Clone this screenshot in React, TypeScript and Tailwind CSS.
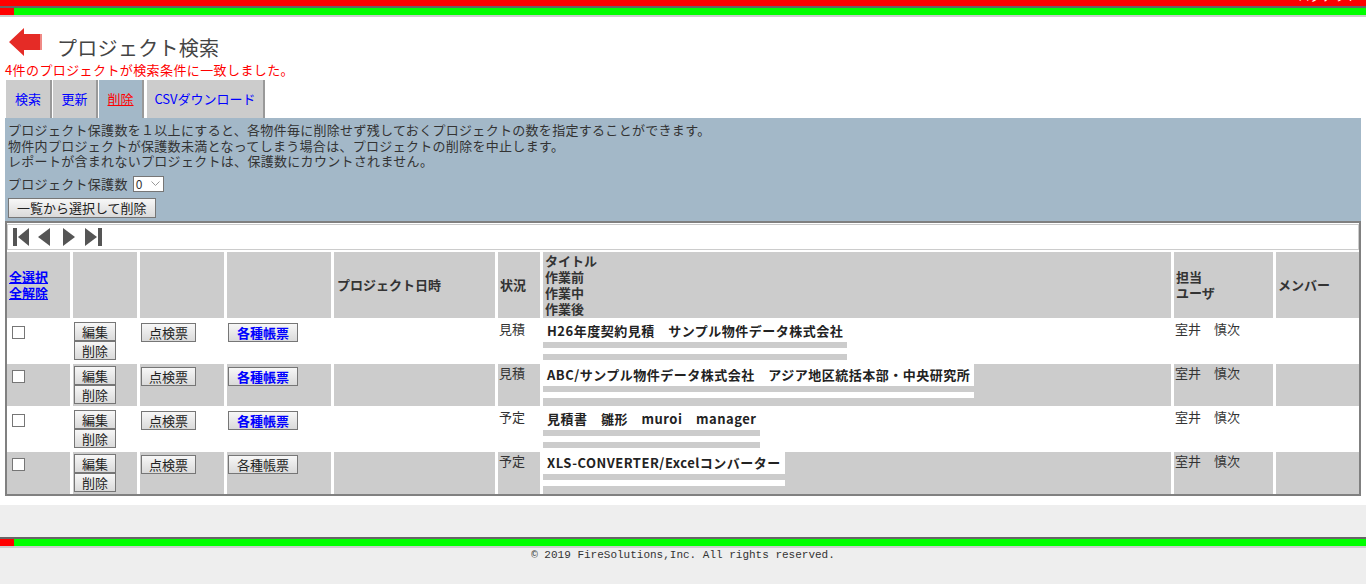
import React from "react";

type Row = {
  status: string;
  title: string;
  user: string;
  gray: boolean;
  boldForms: boolean;
};

const ROWS: Row[] = [
  { status: "見積", title: "H26年度契約見積　サンプル物件データ株式会社", user: "室井　慎次", gray: false, boldForms: true },
  { status: "見積", title: "ABC/サンプル物件データ株式会社　アジア地区統括本部・中央研究所", user: "室井　慎次", gray: true, boldForms: true },
  { status: "予定", title: "見積書　雛形　muroi　manager", user: "室井　慎次", gray: false, boldForms: true },
  { status: "予定", title: "XLS-CONVERTER/Excelコンバーター", user: "室井　慎次", gray: true, boldForms: false },
];

const btn =
  "bg-linear-to-b from-[#f7f7f7] to-[#dadada] border border-[#767676] text-[13px] leading-[17px] text-[#222] whitespace-nowrap";

// header stripes (red / gray / green)
function Stripe({ top }: { top: boolean }) {
  return (
    <div>
      {top && (
        <div className="h-[6px] bg-[#ff0000] overflow-hidden flex justify-end pr-[8px]">
          <span className="text-white text-[12px] leading-[12px] -mt-[10px]">ログアウト</span>
        </div>
      )}
      <div className="h-[2px] bg-[#666]" />
      <div className="h-[7px] bg-[#00ff00] flex">
        <div className="w-[14px] bg-[#ff0000]" />
      </div>
      <div className="h-[2px] bg-[#ccc]" />
    </div>
  );
}

function NavIcons() {
  return (
    <svg width="92" height="18" viewBox="0 0 92 18" className="block">
      <g fill="#555">
        <rect x="0" y="0" width="4" height="18" />
        <polygon points="16,0 16,18 5,9" />
        <polygon points="37,0 37,18 25,9" />
        <polygon points="50,0 50,18 62,9" />
        <polygon points="72,0 72,18 84,9" />
        <rect x="85" y="0" width="4" height="18" />
      </g>
    </svg>
  );
}

export default function App() {
  const cell = (gray: boolean) => (gray ? "bg-[#cccccc]" : "bg-white");
  return (
    <div className="w-[1366px] min-h-[585px] bg-white text-[#333] font-['Noto_Sans_CJK_JP','Noto_Sans',sans-serif]">
      <Stripe top />

      {/* title */}
      <div className="flex items-start pl-[9px] pt-[11px]">
        <svg width="33" height="28" viewBox="0 0 33 28" className="block">
          <polygon points="0,14 15,0 15,6 32,6 32,22 15,22 15,28" fill="#e52b26" />
          <rect x="31" y="6" width="2" height="16" fill="#f08a86" />
        </svg>
        <h1 className="ml-[15px] mt-[8px] text-[20px] leading-[24px] text-[#444] tracking-[0.3px]">
          プロジェクト検索
        </h1>
      </div>
      <p className="pl-[5px] mt-[2px] text-[13px] leading-[16px] text-[#ff0000] tracking-[0.4px]">
        4件のプロジェクトが検索条件に一致しました。
      </p>

      {/* tabs */}
      <div className="flex mt-[2px] pl-[6px] h-[38px] text-[13px]">
        <div className="w-[46px] bg-[#ccc] border-r-2 border-[#999] flex items-center justify-center text-[#0000ff]">検索</div>
        <div className="ml-[1px] w-[45px] bg-[#ccc] border-r-2 border-[#999] flex items-center justify-center text-[#0000ff]">更新</div>
        <div className="ml-[1px] w-[45px] bg-[#a3b8c8] border-r-2 border-[#999] flex items-center justify-center text-[#ff0000] underline">削除</div>
        <div className="ml-[3px] w-[118px] bg-[#ccc] border-r-2 border-[#999] flex items-center justify-center text-[#0000ff]">CSVダウンロード</div>
      </div>

      {/* panel */}
      <div className="mx-[5px] bg-[#a3b8c8] px-[3px] pt-[4px] pb-[3px] text-[13px] leading-[15.5px] tracking-[0.3px]">
        <p>プロジェクト保護数を１以上にすると、各物件毎に削除せず残しておくプロジェクトの数を指定することができます。</p>
        <p>物件内プロジェクトが保護数未満となってしまう場合は、プロジェクトの削除を中止します。</p>
        <p>レポートが含まれないプロジェクトは、保護数にカウントされません。</p>
        <div className="flex items-center mt-[7px] h-[16px]">
          <span>プロジェクト保護数</span>
          <div className="ml-[5px] w-[31px] h-[16px] bg-white border border-[#767676] flex items-center justify-between pl-[2px] pr-[3px] text-[12px] leading-[14px] tracking-normal">
            <span>0</span>
            <svg width="9" height="5" viewBox="0 0 9 5">
              <polyline points="0.5,0.5 4.5,4.5 8.5,0.5" fill="none" stroke="#999" strokeWidth="1" />
            </svg>
          </div>
        </div>
        <button className={`${btn} mt-[6px] px-[8px] leading-[18px] block tracking-normal`}>一覧から選択して削除</button>
      </div>

      {/* table */}
      <div className="mx-[5px] border-2 border-[#808080] bg-white">
        <div className="mt-[1px] h-[26px] border border-[#ccc] flex items-center pl-[5px]">
          <NavIcons />
        </div>
        <div className="mt-[2px] grid grid-cols-[63px_64px_84px_104px_161px_42px_1fr_99px_83px] gap-x-[3px] gap-y-[2px] text-[13px]">
          {/* header */}
          <div className="bg-[#ccc] h-[66px] flex flex-col justify-center pl-[2px] font-bold leading-[16px] text-[#0000ff] underline">
            <span>全選択</span>
            <span>全解除</span>
          </div>
          <div className="bg-[#ccc]" />
          <div className="bg-[#ccc]" />
          <div className="bg-[#ccc]" />
          <div className="bg-[#ccc] flex items-center pl-[3px] font-bold">プロジェクト日時</div>
          <div className="bg-[#ccc] flex items-center pl-[2px] font-bold">状況</div>
          <div className="bg-[#ccc] flex flex-col justify-center pl-[2px] font-bold leading-[16px]">
            <span>タイトル</span>
            <span>作業前</span>
            <span>作業中</span>
            <span>作業後</span>
          </div>
          <div className="bg-[#ccc] flex flex-col justify-center pl-[2px] font-bold leading-[16px]">
            <span>担当</span>
            <span>ユーザ</span>
          </div>
          <div className="bg-[#ccc] flex items-center pl-[2px] font-bold">メンバー</div>

          {ROWS.map((r, i) => (
            <React.Fragment key={i}>
              <div className={`${cell(r.gray)} pl-[5px] pt-[6px]`}>
                <div className="w-[13px] h-[13px] bg-white border border-[#767676]" />
              </div>
              <div className={`${cell(r.gray)} pl-[1px] pt-[2px] flex flex-col items-start`}>
                <button className={`${btn} px-[7px]`}>編集</button>
                <button className={`${btn} px-[7px]`}>削除</button>
              </div>
              <div className={`${cell(r.gray)} pl-[1px] pt-[3px]`}>
                <button className={`${btn} px-[7px]`}>点検票</button>
              </div>
              <div className={`${cell(r.gray)} pl-[1px] pt-[3px]`}>
                {r.boldForms ? (
                  <button className={`${btn} px-[8px] font-bold !text-[#0000ff]`}>各種帳票</button>
                ) : (
                  <button className={`${btn} px-[8px]`}>各種帳票</button>
                )}
              </div>
              <div className={cell(r.gray)} />
              <div className={`${cell(r.gray)} pl-[1px] pt-[1px] leading-[16px]`}>{r.status}</div>
              <div className={`${cell(r.gray)} pb-[2px]`}>
                <div className="inline-flex flex-col">
                  <div className="bg-white h-[22px] px-[4px] flex items-center font-bold tracking-[0.5px] text-[#222] whitespace-nowrap">
                    {r.title}
                  </div>
                  <div className="h-[6px] bg-[#ccc]" />
                  <div className="h-[6px] bg-white" />
                  <div className="h-[6px] bg-[#ccc]" />
                </div>
              </div>
              <div className={`${cell(r.gray)} pl-[1px] pt-[1px] leading-[16px]`}>{r.user}</div>
              <div className={cell(r.gray)} />
            </React.Fragment>
          ))}
        </div>
      </div>

      <div className="h-[9px]" />
      <div className="bg-[#eeeeee]">
        <div className="h-[32px]" />
        <Stripe top={false} />
        <div className="h-[36px] text-center font-['Liberation_Mono',monospace] text-[11px] leading-[14px] text-[#333]">
          © 2019 FireSolutions,Inc. All rights reserved.
        </div>
      </div>
    </div>
  );
}
